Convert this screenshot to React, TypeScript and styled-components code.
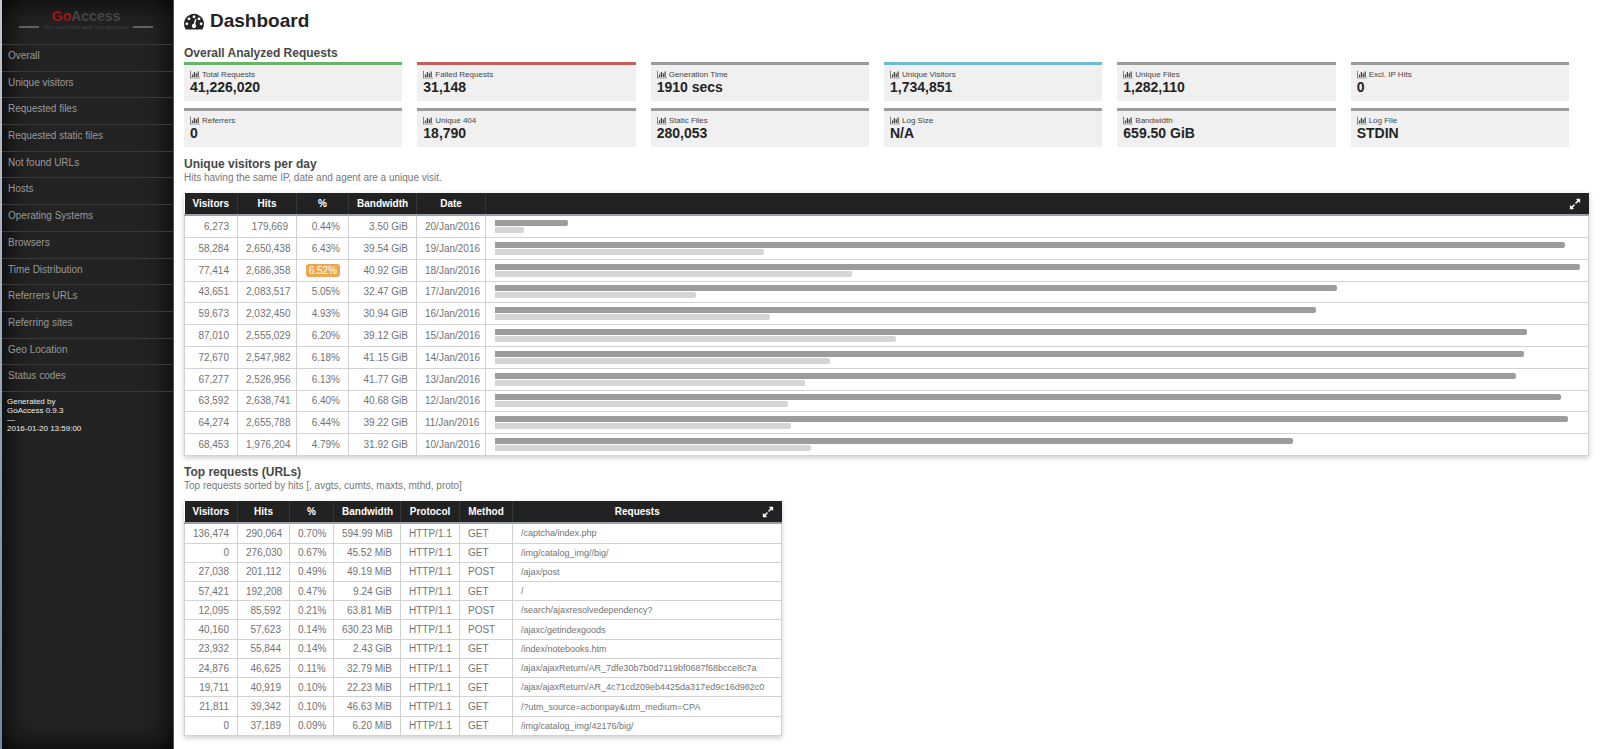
import React from "react";
import styled, { createGlobalStyle } from "styled-components";

const GlobalStyle = createGlobalStyle`
  * { box-sizing: border-box; }
  body {
    margin: 0;
    background: #fff;
    color: #242424;
    font-family: "Liberation Sans", Arial, sans-serif;
    font-size: 10px;
  }
`;

const Page = styled.div`
  display: flex;
  min-height: 100vh;
  border-left: 2px solid;
  border-image: linear-gradient(#c3c8ce, #6b88a8) 1;
`;

const Sidebar = styled.nav`
  flex: none;
  width: 172px;
  background: #232323;
  box-shadow: inset 0 0 30px #000;
  border-right: 1px solid #555;
`;

const Brand = styled.div`
  height: 44px;
  padding: 7px 3px 0 0;
  text-align: center;
  color: #454545;
  font-size: 14px;
  font-weight: bold;
  line-height: 18px;
`;

const BrandAccent = styled.span`
  color: #a31515;
`;

const Tagline = styled.div`
  display: flex;
  align-items: center;
  justify-content: center;
  gap: 4px;
  color: #3a3a3a;
  font-size: 6px;
  font-style: italic;
  line-height: 4px;
  white-space: nowrap;

  &::before,
  &::after {
    content: "";
    width: 20px;
    height: 2px;
    background: #606060;
  }
`;

const Menu = styled.ul`
  display: grid;
  grid-auto-rows: 1fr;
  height: 348px;
  margin: 0;
  padding: 0;
  list-style: none;
  border-bottom: 1px solid #3a3a3a;
`;

const MenuItem = styled.li`
  display: flex;
  border-top: 1px solid #3a3a3a;
`;

const MenuLink = styled.a`
  flex: 1;
  padding: 5px 6px 0;
  color: #999;
  line-height: 12px;
  text-decoration: none;
`;

const Generated = styled.div`
  padding: 5px;
  color: #eee;
  font-size: 8px;
  line-height: 9px;
`;

const Main = styled.main`
  flex: 1;
  min-width: 0;
  padding: 10px 11px 5px 10px;
`;

const Title = styled.h1`
  display: flex;
  align-items: center;
  gap: 6px;
  height: 22px;
  margin: 0 0 14px;
  font-size: 19px;
  line-height: 22px;
`;

const Heading = styled.h2`
  margin: 0;
  color: #484848;
  font-size: 12px;
  line-height: 14px;
`;

const Description = styled.p`
  margin: 0 0 8px;
  color: #777;
  line-height: 14px;
`;

const Cards = styled.div`
  display: grid;
  grid-template-columns: repeat(6, 1fr);
  gap: 7px 15px;
  margin: 2px 20px 10px 0;
`;

const Card = styled.div<{ $accent?: string }>`
  height: 39px;
  padding: 5px 6px 0;
  background: #f0f0f0;
  border-top: 3px solid ${(p) => p.$accent ?? "#9b9b9b"};
`;

const CardLabel = styled.div`
  display: flex;
  align-items: center;
  gap: 2px;
  color: #444;
  font-size: 8px;
  line-height: 8px;
`;

const CardValue = styled.div`
  font-size: 14px;
  font-weight: bold;
  line-height: 16px;
`;

const Table = styled.table<{ $full?: boolean; $height: number }>`
  width: ${(p) => (p.$full ? "100%" : "598px")};
  height: ${(p) => p.$height}px;
  margin-bottom: 9px;
  border-collapse: collapse;
  table-layout: fixed;
  color: #737373;
  box-shadow: 0 2px 5px rgba(0, 0, 0, 0.2);
`;

const HeadRow = styled.tr`
  height: 22px;
  background: #222;
  border-bottom: 2px solid #9ba0a8;
`;

const Th = styled.th<{ $align?: string }>`
  padding: 0 8px;
  color: #fff;
  border-right: 1px solid #33363b;
  text-align: ${(p) => p.$align ?? "center"};

  &:last-child { border-right: 0; }
`;

const HeadWithAction = styled.div`
  display: flex;
  align-items: center;
  gap: 8px;
`;

const HeadText = styled.span`
  flex: 1;
`;

const ExpandButton = styled.button`
  display: flex;
  padding: 0;
  color: #fff;
  background: none;
  border: 0;
`;

const Td = styled.td<{ $align?: string }>`
  padding: 0 8px;
  border: 1px solid #d2d2d2;
  text-align: ${(p) => p.$align ?? "right"};
  white-space: nowrap;
`;

const UrlCell = styled(Td)`
  font-size: 9px;
`;

const Badge = styled.span`
  display: inline-block;
  padding: 0 3px;
  color: #fff;
  background: #e9a950;
  border-radius: 3px;
  line-height: 13px;
`;

const BarCell = styled.td`
  padding: 1px 8px 0 9px;
  border: 1px solid #d2d2d2;
`;

const Bar = styled.div<{ $light?: boolean }>`
  height: 6px;
  margin-bottom: 1px;
  background: ${(p) => (p.$light ? "#d5d5d5" : "#9c9c9c")};
  border-radius: 0 2px 2px 0;
`;

const GaugeIcon = () => (
  <svg width="20" height="20" viewBox="0 0 1792 1792" fill="currentColor" aria-hidden="true">
    <path d="M384 1152q0-53-37.5-90.5t-90.5-37.5-90.5 37.5-37.5 90.5 37.5 90.5 90.5 37.5 90.5-37.5 37.5-90.5zm192-448q0-53-37.5-90.5t-90.5-37.5-90.5 37.5-37.5 90.5 37.5 90.5 90.5 37.5 90.5-37.5 37.5-90.5zm428 481l101-382q6-26-7.5-48.5t-38.5-29.5-48 6.5-30 39.5l-101 382q-60 5-107 43.5t-63 98.5q-20 77 20 146t117 89 146-20 89-117q16-60-6-117t-72-91zm660-33q0-53-37.5-90.5t-90.5-37.5-90.5 37.5-37.5 90.5 37.5 90.5 90.5 37.5 90.5-37.5 37.5-90.5zm-640-640q0-53-37.5-90.5t-90.5-37.5-90.5 37.5-37.5 90.5 37.5 90.5 90.5 37.5 90.5-37.5 37.5-90.5zm448 192q0-53-37.5-90.5t-90.5-37.5-90.5 37.5-37.5 90.5 37.5 90.5 90.5 37.5 90.5-37.5 37.5-90.5zm320 448q0 261-141 483-19 29-54 29h-1402q-35 0-54-29-141-221-141-483 0-182 71-348t191-286 286-191 348-71 348 71 286 191 191 286 71 348z" />
  </svg>
);

const ChartIcon = () => (
  <svg width="10" height="9" viewBox="0 0 2048 1792" fill="currentColor" aria-hidden="true">
    <path d="M640 896v512h-256v-512h256zm384-512v1024h-256v-1024h256zm1024 1152v128h-2048v-1536h128v1408h1920zm-640-896v768h-256v-768h256zm384-384v1152h-256v-1152h256z" />
  </svg>
);

const ExpandIcon = () => (
  <svg width="12" height="12" viewBox="0 0 1792 1792" fill="currentColor" aria-hidden="true">
    <path d="M883 1056q0 13-10 23l-332 332 144 144q19 19 19 45t-19 45-45 19h-448q-26 0-45-19t-19-45v-448q0-26 19-45t45-19 45 19l144 144 332-332q10-10 23-10t23 10l114 114q10 10 10 23zm781-864v448q0 26-19 45t-45 19-45-19l-144-144-332 332q-10 10-23 10t-23-10l-114-114q-10-10-10-23t10-23l332-332-144-144q-19-19-19-45t19-45 45-19h448q26 0 45 19t19 45z" />
  </svg>
);

const menu = [
  "Overall", "Unique visitors", "Requested files", "Requested static files", "Not found URLs", "Hosts",
  "Operating Systems", "Browsers", "Time Distribution", "Referrers URLs", "Referring sites", "Geo Location",
  "Status codes",
];

const cards: { label: string; value: string; accent?: string }[] = [
  { label: "Total Requests", value: "41,226,020", accent: "#6ab46a" },
  { label: "Failed Requests", value: "31,148", accent: "#c75f5b" },
  { label: "Generation Time", value: "1910 secs" },
  { label: "Unique Visitors", value: "1,734,851", accent: "#6fbbd3" },
  { label: "Unique Files", value: "1,282,110" },
  { label: "Excl. IP Hits", value: "0" },
  { label: "Referrers", value: "0" },
  { label: "Unique 404", value: "18,790" },
  { label: "Static Files", value: "280,053" },
  { label: "Log Size", value: "N/A" },
  { label: "Bandwidth", value: "659.50 GiB" },
  { label: "Log File", value: "STDIN" },
];

const MAX_HITS = 2686358;
const VISITOR_SCALE = 235300;

const days: [number, number, string, string, string][] = [
  [6273, 179669, "0.44%", "3.50 GiB", "20/Jan/2016"],
  [58284, 2650438, "6.43%", "39.54 GiB", "19/Jan/2016"],
  [77414, 2686358, "6.52%", "40.92 GiB", "18/Jan/2016"],
  [43651, 2083517, "5.05%", "32.47 GiB", "17/Jan/2016"],
  [59673, 2032450, "4.93%", "30.94 GiB", "16/Jan/2016"],
  [87010, 2555029, "6.20%", "39.12 GiB", "15/Jan/2016"],
  [72670, 2547982, "6.18%", "41.15 GiB", "14/Jan/2016"],
  [67277, 2526956, "6.13%", "41.77 GiB", "13/Jan/2016"],
  [63592, 2638741, "6.40%", "40.68 GiB", "12/Jan/2016"],
  [64274, 2655788, "6.44%", "39.22 GiB", "11/Jan/2016"],
  [68453, 1976204, "4.79%", "31.92 GiB", "10/Jan/2016"],
];

const requests: string[][] = [
  ["136,474", "290,064", "0.70%", "594.99 MiB", "HTTP/1.1", "GET", "/captcha/index.php"],
  ["0", "276,030", "0.67%", "45.52 MiB", "HTTP/1.1", "GET", "/img/catalog_img//big/"],
  ["27,038", "201,112", "0.49%", "49.19 MiB", "HTTP/1.1", "POST", "/ajax/post"],
  ["57,421", "192,208", "0.47%", "9.24 GiB", "HTTP/1.1", "GET", "/"],
  ["12,095", "85,592", "0.21%", "63.81 MiB", "HTTP/1.1", "POST", "/search/ajaxresolvedependency?"],
  ["40,160", "57,623", "0.14%", "630.23 MiB", "HTTP/1.1", "POST", "/ajaxc/getindexgoods"],
  ["23,932", "55,844", "0.14%", "2.43 GiB", "HTTP/1.1", "GET", "/index/notebooks.htm"],
  ["24,876", "46,625", "0.11%", "32.79 MiB", "HTTP/1.1", "GET", "/ajax/ajaxReturn/AR_7dfe30b7b0d7119bf0687f68bcce8c7a"],
  ["19,711", "40,919", "0.10%", "22.23 MiB", "HTTP/1.1", "GET", "/ajax/ajaxReturn/AR_4c71cd209eb4425da317ed9c16d982c0"],
  ["21,811", "39,342", "0.10%", "46.63 MiB", "HTTP/1.1", "GET", "/?utm_source=actionpay&utm_medium=CPA"],
  ["0", "37,189", "0.09%", "6.20 MiB", "HTTP/1.1", "GET", "/img/catalog_img/42176/big/"],
];

const Columns = ({ widths }: { widths: number[] }) => (
  <colgroup>
    {widths.map((w, i) => (
      <col key={i} width={w} />
    ))}
    <col />
  </colgroup>
);

const slug = (text: string) => "#" + text.toLowerCase().replace(/ /g, "-");

export default function App() {
  return (
    <Page>
      <GlobalStyle />
      <Sidebar>
        <Brand>
          <BrandAccent>Go</BrandAccent>Access
          <Tagline>The real time web log analyzer</Tagline>
        </Brand>
        <Menu>
          {menu.map((item) => (
            <MenuItem key={item}>
              <MenuLink href={slug(item)}>{item}</MenuLink>
            </MenuItem>
          ))}
        </Menu>
        <Generated>
          Generated by<br />GoAccess 0.9.3<br />—<br />2016-01-20 13:59:00
        </Generated>
      </Sidebar>
      <Main>
        <Title><GaugeIcon />Dashboard</Title>
        <Heading>Overall Analyzed Requests</Heading>
        <Cards>
          {cards.map((c) => (
            <Card key={c.label} $accent={c.accent}>
              <CardLabel><ChartIcon />{c.label}</CardLabel>
              <CardValue>{c.value}</CardValue>
            </Card>
          ))}
        </Cards>
        <Heading>Unique visitors per day</Heading>
        <Description>Hits having the same IP, date and agent are a unique visit.</Description>
        <Table $full $height={263}>
          <Columns widths={[53, 59, 52, 68, 69]} />
          <thead>
            <HeadRow>
              <Th $align="right">Visitors</Th>
              <Th>Hits</Th>
              <Th>%</Th>
              <Th $align="right">Bandwidth</Th>
              <Th>Date</Th>
              <Th>
                <HeadWithAction>
                  <HeadText />
                  <ExpandButton aria-label="Expand unique visitors"><ExpandIcon /></ExpandButton>
                </HeadWithAction>
              </Th>
            </HeadRow>
          </thead>
          <tbody>
            {days.map(([visitors, hits, percent, bandwidth, date]) => (
              <tr key={date}>
                <Td>{visitors.toLocaleString("en-US")}</Td>
                <Td>{hits.toLocaleString("en-US")}</Td>
                <Td>{hits === MAX_HITS ? <Badge>{percent}</Badge> : percent}</Td>
                <Td>{bandwidth}</Td>
                <Td $align="center">{date}</Td>
                <BarCell>
                  <Bar style={{ width: `${(hits / MAX_HITS) * 100}%` }} />
                  <Bar $light style={{ width: `${(visitors / VISITOR_SCALE) * 100}%` }} />
                </BarCell>
              </tr>
            ))}
          </tbody>
        </Table>
        <Heading>Top requests (URLs)</Heading>
        <Description>Top requests sorted by hits [, avgts, cumts, maxts, mthd, proto]</Description>
        <Table $height={235}>
          <Columns widths={[53, 52, 44, 67, 59, 53]} />
          <thead>
            <HeadRow>
              <Th $align="right">Visitors</Th>
              <Th>Hits</Th>
              <Th>%</Th>
              <Th $align="right">Bandwidth</Th>
              <Th>Protocol</Th>
              <Th>Method</Th>
              <Th>
                <HeadWithAction>
                  <HeadText>Requests</HeadText>
                  <ExpandButton aria-label="Expand top requests"><ExpandIcon /></ExpandButton>
                </HeadWithAction>
              </Th>
            </HeadRow>
          </thead>
          <tbody>
            {requests.map(([visitors, hits, percent, bandwidth, protocol, method, url]) => (
              <tr key={url}>
                <Td>{visitors}</Td>
                <Td>{hits}</Td>
                <Td>{percent}</Td>
                <Td>{bandwidth}</Td>
                <Td $align="left">{protocol}</Td>
                <Td $align="left">{method}</Td>
                <UrlCell $align="left">{url}</UrlCell>
              </tr>
            ))}
          </tbody>
        </Table>
      </Main>
    </Page>
  );
}
